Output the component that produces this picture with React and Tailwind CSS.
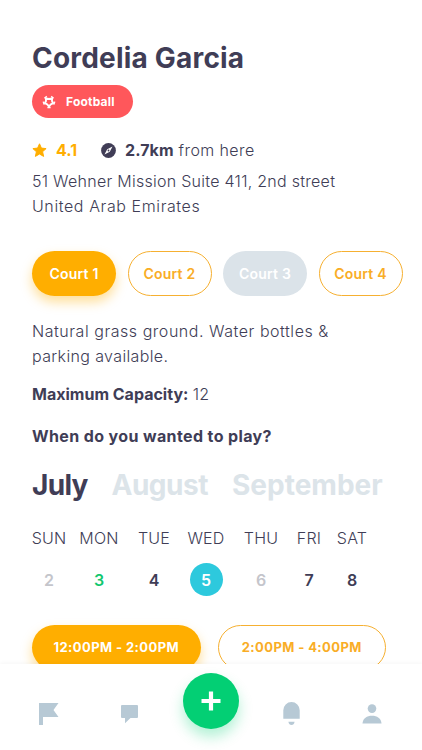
import React, { useState } from 'react';
import clsx from 'clsx';

const courts = [
  { name: 'Court 1' },
  { name: 'Court 2' },
  { name: 'Court 3', disabled: true },
  { name: 'Court 4' },
];

const months = [
  { name: 'July', className: 'w-[56px] tracking-[-0.7px]' },
  { name: 'August', className: 'w-[97px] tracking-[-0.5px]' },
  { name: 'September', className: 'w-[151px] tracking-[0px]' },
];

const days = [
  { label: 'SUN', date: 2, status: 'past' },
  { label: 'MON', date: 3, status: 'today' },
  { label: 'TUE', date: 4, status: 'open' },
  { label: 'WED', date: 5, status: 'open' },
  { label: 'THU', date: 6, status: 'past' },
  { label: 'FRI', date: 7, status: 'open' },
  { label: 'SAT', date: 8, status: 'open' },
];

const slots = ['12:00PM - 2:00PM', '2:00PM - 4:00PM'];

const statusColors = {
  past: 'text-[#c4c5cb]',
  today: 'text-[#12c76f]',
  open: 'text-[#403d56]',
};

const FootballIcon = () => (
  <svg className="w-[14px] h-[14px]" viewBox="0 0 14 14" fill="none" stroke="currentColor">
    <path d="M7 11.3 L5.2 9.4 L2.8 8.2 L4 6 L3.9 3.4 L7 4 L10.1 3.4 L10 6 L11.2 8.2 L8.8 9.4 Z" strokeWidth="1.9" strokeLinejoin="round" />
    <path d="M2.4 3.2 L4.8 1.4 M11.6 3.2 L9.2 1.4 M1.2 6.6 L2.2 9.6 M12.8 6.6 L11.8 9.6 M5.4 12.5 H8.6" strokeWidth="1.4" />
  </svg>
);

const StarIcon = () => (
  <svg className="w-[15px] h-[15px] text-[#ffae00]" viewBox="0 0 15 15" fill="currentColor" stroke="currentColor">
    <path d="M7.5 0.8 L9.4 5.1 L14.1 5.6 L10.6 8.7 L11.6 13.4 L7.5 11 L3.4 13.4 L4.4 8.7 L0.9 5.6 L5.6 5.1 Z" strokeWidth="1" strokeLinejoin="round" />
  </svg>
);

const CompassIcon = () => (
  <svg className="w-[15px] h-[15px]" viewBox="0 0 15 15">
    <circle cx="7.5" cy="7.5" r="7.4" fill="#403d56" />
    <path d="M11.5 3.5 L8.8 8.8 L3.5 11.5 L6.2 6.2 Z" fill="#fff" />
    <circle cx="7.5" cy="7.5" r="0.9" fill="#403d56" />
  </svg>
);

const FlagIcon = () => (
  <svg className="w-[20px] h-[22px]" viewBox="0 0 20 22" fill="currentColor">
    <path d="M0 0 H19.5 L14.5 7 L19.5 14 H4 V22 H0 Z" />
  </svg>
);

const ChatIcon = () => (
  <svg className="w-[17px] h-[19px]" viewBox="0 0 17 19" fill="currentColor">
    <path d="M1 0 H16 Q17 0 17 1 V12 Q17 13 16 13 H9.5 L4 18.3 V13 H1 Q0 13 0 12 V1 Q0 0 1 0 Z" />
  </svg>
);

const BellIcon = () => (
  <svg className="w-[17px] h-[23px]" viewBox="0 0 17 23" fill="currentColor">
    <path d="M0.3 16.8 V8.2 A8.2 8.2 0 0 1 16.7 8.2 V16.8 Z" />
    <path d="M5.4 19.7 H11.6 Q11 23 8.5 23 Q6 23 5.4 19.7 Z" />
  </svg>
);

const UserIcon = () => (
  <svg className="w-[20px] h-[21px]" viewBox="0 0 20 21" fill="currentColor">
    <circle cx="10" cy="4.6" r="4.3" />
    <path d="M0.5 19.6 C0.8 14.3 5 11.8 10 11.8 C15 11.8 19.2 14.3 19.5 19.6 Z" />
  </svg>
);

const App = () => {
  const [court, setCourt] = useState('Court 1');
  const [month, setMonth] = useState('July');
  const [date, setDate] = useState(5);
  const [slot, setSlot] = useState(slots[0]);

  return (
    <div className="w-[422px] h-[750px] flex flex-col overflow-hidden bg-white text-[#403d56] font-[Inter,sans-serif] text-[16px] font-light">
      <main className="h-[664px] shrink-0 overflow-hidden pl-8 pt-10">
        {/* Venue */}
        <h1 className="h-9 leading-9 text-[28px] font-bold tracking-[0.2px] whitespace-nowrap">Cordelia Garcia</h1>
        <div className="mt-[9px] w-[101px] h-[33px] rounded-full bg-[#ff575b] text-white flex items-center pl-[10px] gap-[10px]">
          <FootballIcon />
          <span className="text-[12px] font-bold tracking-[0.2px]">Football</span>
        </div>

        <div className="mt-5 h-6 flex items-center whitespace-nowrap">
          <StarIcon />
          <span className="ml-[9px] w-[45px] font-bold text-[#ffae00]">4.1</span>
          <CompassIcon />
          <p className="ml-[9px] tracking-[0.4px]">
            <span className="font-bold tracking-[0.1px]">2.7km</span> from here
          </p>
        </div>
        <p className="mt-[7px] leading-[24.5px] whitespace-nowrap">
          <span className="tracking-[0.27px]">51 Wehner Mission Suite 411, 2nd street</span><br />
          <span className="tracking-[0.6px]">United Arab Emirates</span>
        </p>

        {/* Courts */}
        <div className="mt-[33px] flex gap-[11.5px]">
          {courts.map(({ name, disabled }) => (
            <button
              key={name}
              disabled={disabled}
              onClick={() => setCourt(name)}
              className={clsx(
                'w-[84px] h-[45px] shrink-0 rounded-full text-[14px] font-semibold tracking-[0.2px] whitespace-nowrap',
                disabled && 'bg-[#dbe3e9] text-white',
                !disabled && court === name && 'bg-[#ffae00] text-white shadow-[0_6px_12px_rgba(255,174,0,0.4)]',
                !disabled && court !== name && 'border-[1.5px] border-[#f6b031] text-[#f9ad26]'
              )}
            >
              {name}
            </button>
          ))}
        </div>

        <p className="mt-[23px] leading-[24.5px] whitespace-nowrap">
          <span className="tracking-[0.54px]">Natural grass ground. Water bottles &</span><br />
          <span className="tracking-[0.37px]">parking available.</span>
        </p>
        <p className="mt-[14px] h-6 leading-6 whitespace-nowrap">
          <span className="font-bold">Maximum Capacity:</span> 12
        </p>
        <p className="mt-[18px] h-6 leading-6 font-bold tracking-[0.38px] whitespace-nowrap">When do you wanted to play?</p>

        {/* Months */}
        <div className="mt-[19px] h-9 flex items-center gap-[23.5px] text-[28px] leading-9 font-bold">
          {months.map(({ name, className }) => (
            <button
              key={name}
              onClick={() => setMonth(name)}
              className={clsx(className, 'text-left whitespace-nowrap', month !== name && 'text-[#dce4e9]')}
            >
              {name}
            </button>
          ))}
        </div>

        {/* Calendar week */}
        <div className="mt-[23px] grid grid-cols-[34px_66px_44px_60px_50px_46px_40px] justify-items-center">
          {days.map((day) => (
            <span key={day.label} className="h-6 leading-6 tracking-[0.2px]">{day.label}</span>
          ))}
          {days.map((day) => (
            <button
              key={day.date}
              onClick={() => setDate(day.date)}
              className={clsx(
                'mt-[13px] size-[33px] rounded-full text-[16px] font-semibold',
                date === day.date ? 'bg-[#2dc9dd] text-white' : statusColors[day.status]
              )}
            >
              {day.date}
            </button>
          ))}
        </div>

        {/* Time slots */}
        <div className="mt-[29px] flex gap-[17px]">
          {slots.map((time) => (
            <button
              key={time}
              onClick={() => setSlot(time)}
              className={clsx(
                'w-[168.5px] h-[45px] shrink-0 rounded-full text-[13px] font-bold tracking-[0.4px] whitespace-nowrap',
                slot === time
                  ? 'bg-[#ffae00] text-white shadow-[0_6px_12px_rgba(255,174,0,0.4)]'
                  : 'border-[1.5px] border-[#f6b031] text-[#f9ad26]'
              )}
            >
              {time}
            </button>
          ))}
        </div>
      </main>

      {/* Bottom navigation */}
      <nav className="relative h-[86px] shrink-0 bg-white pl-[39px] pt-[9px] flex items-start text-[#b7c9d5] shadow-[0_-1px_4px_rgba(0,0,0,0.04)]">
        <button className="mt-[30px]"><FlagIcon /></button>
        <button className="mt-8 ml-[62px]"><ChatIcon /></button>
        <button className="ml-[45px] size-14 rounded-full bg-[#03cf74] flex items-center justify-center shadow-[0_8px_14px_rgba(3,207,116,0.3)]">
          <svg className="w-5 h-5" viewBox="0 0 20 20" stroke="#fff" strokeWidth="4.2">
            <path d="M10 0.5 V19.5 M0.5 10 H19.5" />
          </svg>
        </button>
        <button className="mt-[29px] ml-[44px]"><BellIcon /></button>
        <button className="mt-[31px] ml-[62px]"><UserIcon /></button>
      </nav>
    </div>
  );
};

export default App;
